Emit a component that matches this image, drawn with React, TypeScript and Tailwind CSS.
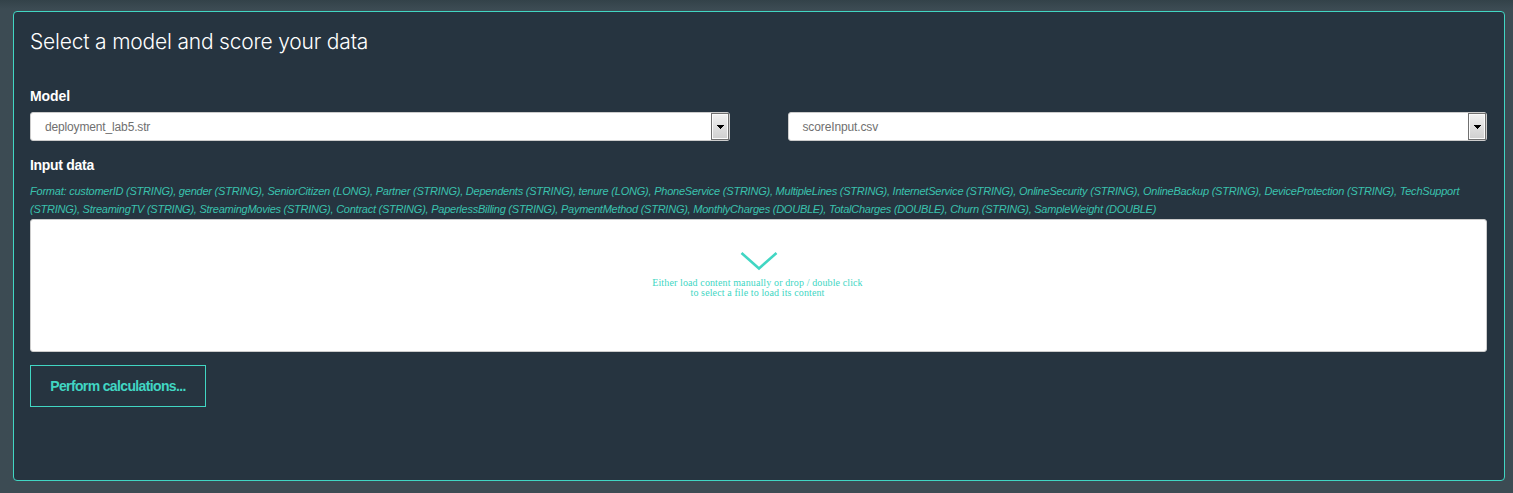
import React from "react";

function Select({ value, textClass }: { value: string; textClass: string }) {
  return (
    <div className="flex h-[29px] min-w-0 flex-1 items-stretch justify-between rounded-[3px] border border-[#cccccc] bg-white">
      <span className={`pl-[14px] text-[12px] leading-[28px] text-[#707070] ${textClass}`}>{value}</span>
      <span className="flex w-[18px] items-center justify-center border border-[#707070] bg-linear-to-b from-[#f2f2f2] to-[#cfcfcf] pl-px shadow-[inset_0_0_0_1px_#fbfbfb]">
        <svg width="7" height="4" viewBox="0 0 7 4" shapeRendering="crispEdges">
          <path d="M0 0h7v1H6v1H5v1H4v1H3V3H2V2H1V1H0z" fill="#000" />
        </svg>
      </span>
    </div>
  );
}

export default function App() {
  return (
    <main className="h-[493px] w-full bg-[#3c4b53] bg-linear-to-b from-[#334249] from-0% to-[#3c4b53] to-[9px] pt-[11px] pr-2 pl-[13px] font-['Liberation_Sans',Arial,sans-serif]">
      <section className="flex h-[470px] flex-col rounded-[4px] border border-[#41d6c3] bg-[#263440] pr-[17px] pl-4">
        <h1 className="mt-[15px] h-[30px] font-['Inter','Liberation_Sans',sans-serif] text-[21px] leading-[30px] font-light tracking-[-0.19px] whitespace-nowrap text-white">
          Select a model and score your data
        </h1>
        <label className="mt-[29px] h-5 text-[14px] leading-5 font-bold tracking-[-0.1px] text-white">Model</label>
        <div className="mt-[6px] flex gap-[58px]">
          <Select value="deployment_lab5.str" textClass="tracking-[-0.15px]" />
          <Select value="scoreInput.csv" textClass="tracking-[-0.13px]" />
        </div>
        <label className="mt-[14px] h-5 text-[14px] leading-5 font-bold tracking-[-0.3px] text-white">Input data</label>
        <p className="mt-[7px] h-9 text-[11px] leading-[18px] whitespace-nowrap text-[#3ac2ae] italic">
          <span className="block tracking-[-0.22px]">
            Format: customerID (STRING), gender (STRING), SeniorCitizen (LONG), Partner (STRING), Dependents (STRING), tenure (LONG), PhoneService (STRING), MultipleLines (STRING), InternetService (STRING), OnlineSecurity (STRING), OnlineBackup (STRING), DeviceProtection (STRING), TechSupport
          </span>
          <span className="block tracking-[-0.243px]">
            (STRING), StreamingTV (STRING), StreamingMovies (STRING), Contract (STRING), PaperlessBilling (STRING), PaymentMethod (STRING), MonthlyCharges (DOUBLE), TotalCharges (DOUBLE), Churn (STRING), SampleWeight (DOUBLE)
          </span>
        </p>
        <div className="mt-px flex h-[133px] flex-col items-center rounded-[3px] border border-[#cccccc] bg-white pt-[31px] pr-[2px]">
          <svg className="ml-[2px]" width="38" height="20" viewBox="0 0 38 20" fill="none" stroke="#41d6c3" strokeWidth="2.6">
            <path d="M1.5 2 19 17.5 36.5 2" />
          </svg>
          <p className="mt-[7px] text-center font-['Liberation_Serif','Times_New_Roman',serif] text-[10px] leading-[10px] tracking-[0.12px] text-[#41d6c3]">
            Either load content manually or drop / double click
            <br />
            to select a file to load its content
          </p>
        </div>
        <button className="mt-[13px] h-[42px] w-[176px] border border-[#41d6c3] text-[14px] font-bold tracking-[-0.64px] whitespace-nowrap text-[#41d6c3] pt-px">
          Perform calculations...
        </button>
      </section>
    </main>
  );
}
